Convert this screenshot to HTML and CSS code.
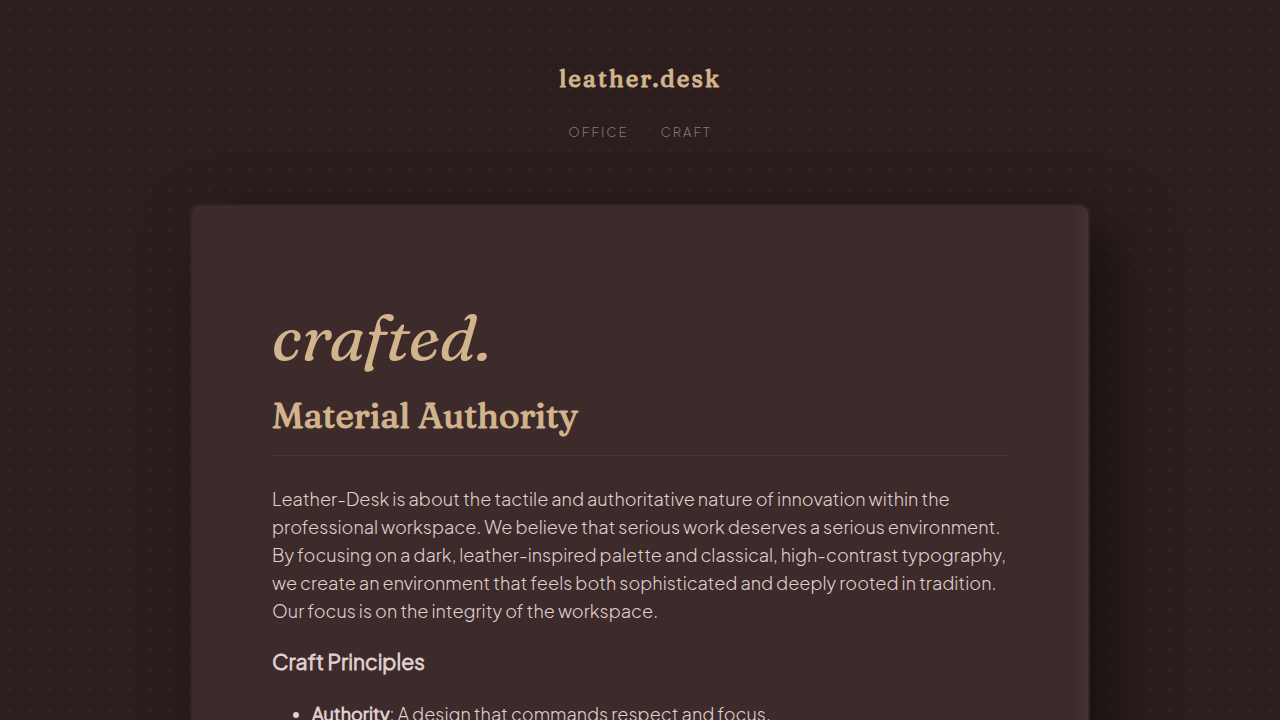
FILE: index.html
```html
<!DOCTYPE html>
<html lang="en">
<head>
<meta charset="utf-8">
<meta name="viewport" content="width=device-width, initial-scale=1">
<title>leather.desk</title>
<link rel="stylesheet" href="styles.css">
</head>
<body>
<header class="site-header">
  <div class="logo">leather.desk</div>
  <nav class="site-nav">
    <a href="#office">Office</a>
    <a href="#craft">Craft</a>
  </nav>
</header>
<main class="desk">
  <h1 class="hero">crafted.</h1>
  <h2 class="section-title">Material Authority</h2>
  <p class="intro">Leather-Desk is about the tactile and authoritative nature of innovation within the professional workspace. We believe that serious work deserves a serious environment. By focusing on a dark, leather-inspired palette and classical, high-contrast typography, we create an environment that feels both sophisticated and deeply rooted in tradition. Our focus is on the integrity of the workspace.</p>
  <h3 class="subtitle">Craft Principles</h3>
  <ul class="principles">
    <li><strong>Authority</strong>: A design that commands respect and focus.</li>
  </ul>
</main>
</body>
</html>
```
FILE: styles.css
```css
body {
  margin: 0;
  background-color: #2c1e1e;
  background-image: radial-gradient(#3d2b2b 1px, transparent 1px);
  background-size: 20px 20px;
  color: #e0d0d0;
  font-family: "Plus Jakarta Sans", Lato, sans-serif;
  font-size: 18px;
  font-weight: 300;
  line-height: 28px;
}

.site-header {
  padding: 60px 20px 62px;
  text-align: center;
}

.logo {
  color: #d2b48c;
  font-family: Fraunces, "Liberation Serif", serif;
  font-size: 24px;
  font-weight: 400;
  letter-spacing: 2px;
  line-height: 38px;
  -webkit-text-stroke: 1px currentColor;
}

.site-nav {
  display: flex;
  justify-content: center;
  gap: 32px;
  margin-top: 24px;
  line-height: 20px;
}

.site-nav a {
  color: #8b7373;
  font-size: 13px;
  letter-spacing: 2px;
  text-decoration: none;
  text-transform: uppercase;
}

.desk {
  box-sizing: border-box;
  max-width: 900px;
  margin: 0 auto 80px;
  padding: 80px;
  border: 2px solid #352424;
  border-radius: 10px;
  background: #3d2b2b;
  box-shadow: 20px 20px 60px rgba(0, 0, 0, 0.5), inset -15px 0 15px -10px rgba(255, 255, 255, 0.05);
}

.hero {
  margin: 16px 0 20px;
  color: #d2b48c;
  font-family: Fraunces, "Liberation Serif", serif;
  font-size: 64px;
  font-style: italic;
  font-weight: 400;
  line-height: 70px;
}

.section-title {
  margin: 0 0 29px;
  padding-bottom: 16px;
  border-bottom: 1px solid #4a3535;
  color: #d2b48c;
  font-family: Fraunces, "Liberation Serif", serif;
  font-size: 35px;
  font-weight: 400;
  line-height: 47px;
  -webkit-text-stroke: 1px currentColor;
}

.intro {
  margin: 0 0 23px;
}

.subtitle {
  margin: 0 0 24px;
  font-size: 21px;
  font-weight: 300;
  line-height: 28px;
  -webkit-text-stroke: 1px currentColor;
}

.principles {
  margin: 0;
  padding-left: 40px;
}

.principles strong {
  font-weight: 300;
  -webkit-text-stroke: 1px currentColor;
}
```
